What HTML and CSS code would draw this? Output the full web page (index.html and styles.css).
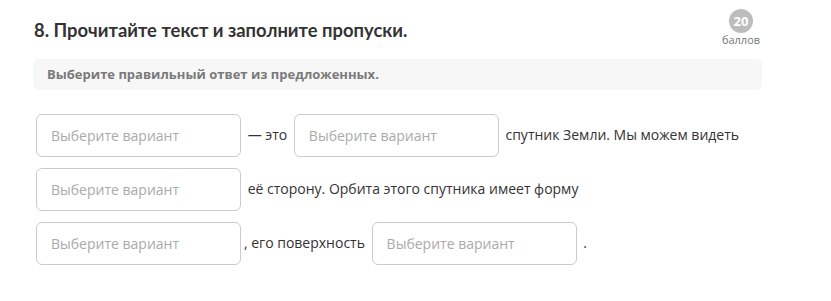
FILE: index.html
```html
<!DOCTYPE html>
<html lang="ru">
<head>
  <meta charset="UTF-8" />
  <meta name="viewport" content="width=device-width, initial-scale=1.0"/>
  <title>Задание 8</title>
  <link rel="stylesheet" href="styles.css">
</head>
<body>
  <div class="task">
    <div class="task-header">
      <h2 class="task-title">8. Прочитайте текст и заполните пропуски.</h2>
      <div class="score">
        <span class="score-num">20</span>
        <span class="score-label">баллов</span>
      </div>
    </div>
    <div class="hint">Выберите правильный ответ из предложенных.</div>
    <div class="gap-text">
      <span class="blank">Выберите вариант</span> — это
      <span class="blank">Выберите вариант</span> спутник Земли. Мы можем видеть
      <span class="blank">Выберите вариант</span> её сторону. Орбита этого спутника имеет форму
      <span class="blank">Выберите вариант</span>, его поверхность
      <span class="blank">Выберите вариант</span> .
    </div>
  </div>
</body>
</html>
```

FILE: styles.css
```css
* {
  box-sizing: border-box;
  margin: 0;
  padding: 0;
}

body {
  background: #ffffff;
  font-family: 'Open Sans', 'Noto Sans', sans-serif;
  color: #333333;
}

.task {
  width: 729px;
  margin-left: 33px;
  padding-top: 9px;
}

.task-header {
  display: flex;
  justify-content: space-between;
  align-items: flex-start;
}

.task-title {
  font-family: Lato, 'Open Sans', sans-serif;
  font-size: 18.4px;
  font-weight: 700;
  line-height: 24px;
  margin-top: 9px;
  margin-left: 1px;
  color: #333333;
}

.score {
  display: flex;
  flex-direction: column;
  align-items: center;
  width: 40px;
  margin-right: 1px;
}

.score-num {
  width: 24px;
  height: 24px;
  border-radius: 50%;
  background: #bdbdbd;
  color: #ffffff;
  font-size: 13px;
  font-weight: 700;
  line-height: 24px;
  text-align: center;
}

.score-label {
  font-size: 11px;
  line-height: 14px;
  color: #777777;
}

.hint {
  margin-top: 12px;
  height: 31px;
  line-height: 31px;
  padding: 0 14px;
  background: #f7f7f7;
  border-radius: 6px;
  font-size: 13px;
  font-weight: 700;
  color: #7a7a7a;
}

.gap-text {
  margin-top: 19px;
  font-size: 14px;
  line-height: 20px;
  color: #333333;
}

.blank {
  display: inline-block;
  vertical-align: middle;
  width: 205px;
  height: 43px;
  margin: 5px 3px 6px;
  padding: 0 14px;
  border: 1px solid #cccccc;
  border-radius: 6px;
  line-height: 41px;
  color: #aaaaaa;
  background: #ffffff;
}
```
